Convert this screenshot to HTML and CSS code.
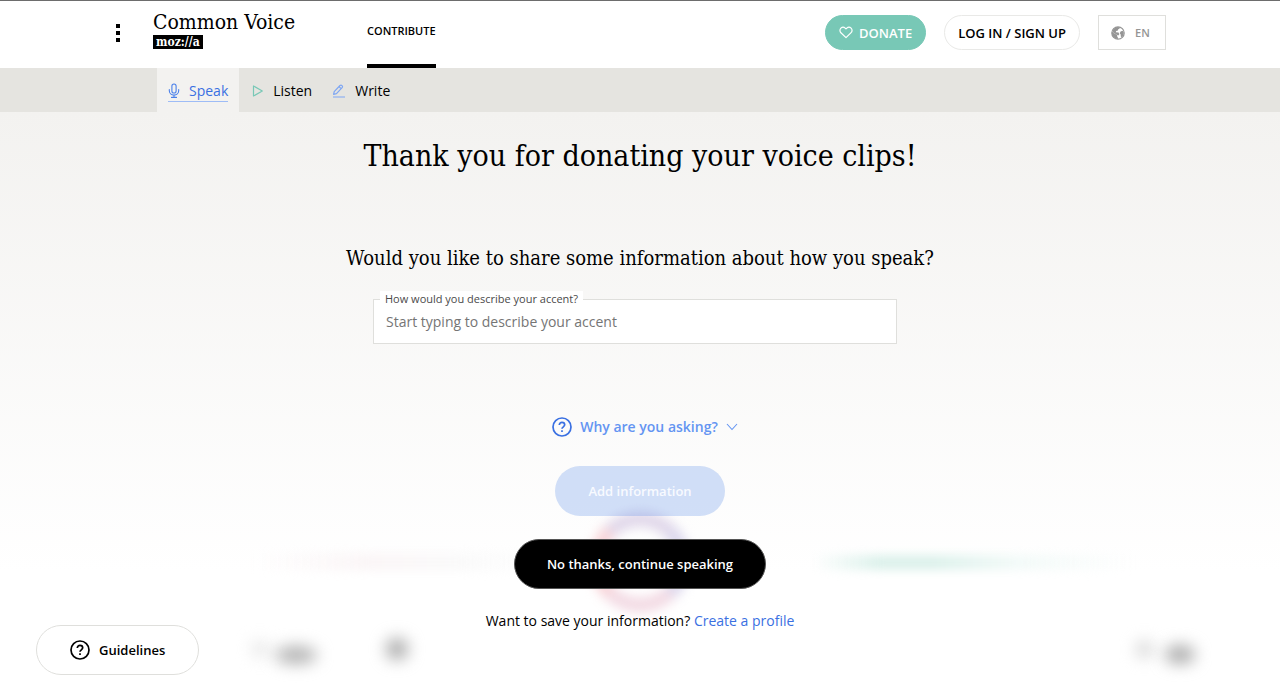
FILE: index.html
```html
<!DOCTYPE html>
<html lang="en">
<head>
<meta charset="utf-8">
<meta name="viewport" content="width=device-width, initial-scale=1">
<title>Common Voice</title>
<link rel="stylesheet" href="styles.css">
</head>
<body>
<header class="header">
  <div class="header-inner">
    <button class="menu-button" type="button" aria-label="Menu"><span></span><span></span><span></span></button>
    <a class="logo" href="#">
      <span class="logo-name">Common Voice</span>
      <span class="logo-brand">moz://a</span>
    </a>
    <nav class="main-nav"><a href="#">CONTRIBUTE</a></nav>
    <div class="header-actions">
      <a class="pill donate" href="#">
        <svg width="14" height="13" viewBox="0 0 14 13" fill="none" stroke="currentColor" stroke-width="1.2" stroke-linejoin="round"><path d="M7 11.600 1.900 6.700C.6 5.400.7 3.300 1.900 2.100 3.100.9 5 .9 6.200 2.100l.8.800.8-.8c1.200-1.200 3.100-1.200 4.300 0s1.300 3.300 0 4.600z"/></svg>
        <span>DONATE</span>
      </a>
      <a class="pill login" href="#">LOG IN / SIGN UP</a>
      <button class="language" type="button">
        <svg width="14" height="14" viewBox="0 0 14 14"><circle cx="7" cy="7" r="6.200" fill="none" stroke="#959595" stroke-width="1.200"/><path fill="#959595" d="M1 5.500 3.200 7.600 4.800 8.200 6.200 9.300v1.200l.7 1V13A6.200 6.200 0 0 1 1 5.500zM3 2.400 6 .9l2.900.3-.5 1.600-1.200.5-.3 1.200-1.700.4-.4 1.400 2.800.3.7 1.700-1 1.300-2.200-1.300-2.600-1.600-1-2.100zM9.600 5.600l2-.9 1.200 1.700-.3 2.600-1.700 2.300-1-.8-.1-2-1-1.200z"/></svg>
        <span>EN</span>
      </button>
    </div>
  </div>
</header>
<nav class="tabs">
  <a class="tab tab-active" href="#">
    <span class="tab-content">
      <svg width="12" height="16" viewBox="0 0 12 16" fill="none" stroke="#4a80ea" stroke-width="1.100" stroke-linecap="round"><rect x="3.900" y="1" width="4.200" height="9" rx="2.100"/><path d="M1.300 6.500v1.300a4.700 4.300 0 0 0 9.400 0V6.500M6 12.200v2M3.500 14.400h5"/></svg>
      <span>Speak</span>
    </span>
  </a>
  <a class="tab" href="#">
    <span class="tab-content">
      <svg width="12" height="14" viewBox="0 0 12 14" fill="none" stroke="#78c8b6" stroke-width="1.200" stroke-linejoin="round"><path d="M1.500 2v10L10.300 7z"/></svg>
      <span>Listen</span>
    </span>
  </a>
  <a class="tab" href="#">
    <span class="tab-content">
      <svg width="14" height="14" viewBox="0 0 14 14" fill="none" stroke="#7ea6f3" stroke-width="1.200" stroke-linejoin="round"><path d="M2.200 7.600 8 1.500q1-.8 2 .1t.1 2L4.500 9.700l-2.900.6zM7 2.600l2.200 2.100M1 13h12"/></svg>
      <span>Write</span>
    </span>
  </a>
</nav>
<main class="content">
  <div class="backdrop" aria-hidden="true">
    <i class="glow ring"></i><i class="glow wave wave-pink"></i><i class="glow wave wave-green"></i>
    <i class="glow spot-a"></i><i class="glow spot-b"></i><i class="glow spot-c"></i><i class="glow spot-d"></i><i class="glow spot-e"></i>
  </div>
  <h1>Thank you for donating your voice clips!</h1>
  <h2>Would you like to share some information about how you speak?</h2>
  <div class="field">
    <label for="accent">How would you describe your accent?</label>
    <input id="accent" type="text" placeholder="Start typing to describe your accent">
  </div>
  <button class="why" type="button">
    <svg width="20" height="20" viewBox="0 0 20 20" fill="none" stroke="#3a70e2" stroke-width="1.700"><circle cx="10" cy="10" r="9"/><path d="M7.300 8c0-1.700 1.200-2.700 2.700-2.700s2.700 1 2.700 2.500c0 1.900-2.700 2.100-2.700 4"/><path d="M10 13.200v1.700"/></svg>
    <span>Why are you asking?</span>
    <svg width="12" height="8" viewBox="0 0 12 8" fill="none" stroke="currentColor" stroke-width="1.100"><path d="m1 1 5 5.500L11 1"/></svg>
  </button>
  <button class="action add" type="button" disabled>Add information</button>
  <button class="action skip" type="button">No thanks, continue speaking</button>
  <p class="profile">Want to save your information? <a href="#">Create a profile</a></p>
</main>
<button class="guidelines" type="button">
  <svg width="20" height="20" viewBox="0 0 20 20" fill="none" stroke="currentColor" stroke-width="1.700"><circle cx="10" cy="10" r="9"/><path d="M7.300 8c0-1.700 1.200-2.700 2.700-2.700s2.700 1 2.700 2.500c0 1.900-2.700 2.100-2.700 4"/><path d="M10 13.200v1.700"/></svg>
  <span>Guidelines</span>
</button>
</body>
</html>
```
FILE: styles.css
```css
* { box-sizing: border-box; }
body {
  margin: 0;
  min-height: 100vh;
  display: flex;
  flex-direction: column;
  font-family: "Open Sans", "Noto Sans", sans-serif;
  font-size: 14px;
  color: #000;
  background: #fff;
}
a { color: inherit; text-decoration: none; }
button { font: inherit; color: inherit; cursor: pointer; }
svg { flex: none; }

.header { border-top: 1px solid #6d6d6d; background: #fff; }
.header-inner { display: flex; height: 67px; padding: 0 114px; }
.menu-button {
  display: flex;
  flex-direction: column;
  align-items: center;
  justify-content: center;
  gap: 3px;
  width: 8px;
  margin-right: 31px;
  padding: 0 0 4px;
  border: 0;
  background: none;
}
.menu-button span { width: 4px; height: 4px; background: #000; }
.logo {
  display: flex;
  flex-direction: column;
  align-items: flex-start;
  width: 144px;
  padding-top: 9px;
  font-family: "DejaVu Serif Condensed", "DejaVu Serif", serif;
  white-space: nowrap;
}
.logo-name { font-size: 21px; line-height: 24px; }
.logo-brand {
  padding: 0 3px;
  margin-top: 1px;
  background: #000;
  color: #fff;
  font-size: 12px;
  font-weight: bold;
  line-height: 14px;
}
.main-nav { display: flex; margin-left: 70px; }
.main-nav a {
  display: flex;
  align-items: center;
  padding-bottom: 5px;
  border-bottom: 4px solid #000;
  font-size: 11px;
  font-weight: 600;
}
.header-actions {
  display: flex;
  align-items: flex-start;
  gap: 18px;
  margin-left: auto;
  padding-top: 14px;
}
.pill {
  display: flex;
  align-items: center;
  gap: 6px;
  height: 35px;
  padding: 0 13px;
  border: 1px solid #e9e9e7;
  border-radius: 18px;
  font-size: 13px;
  font-weight: 600;
  white-space: nowrap;
}
.donate { border-color: #78c8b6; background: #78c8b6; color: #fff; }
.language {
  display: flex;
  align-items: center;
  gap: 10px;
  width: 68px;
  height: 35px;
  padding: 0 12px;
  border: 1px solid #dfdfdc;
  background: #fff;
  color: #959595;
  font-size: 11px;
  font-weight: 600;
}

.tabs { display: flex; height: 44px; padding-left: 157px; background: #e5e4e0; }
.tab { display: flex; align-items: center; padding: 3px 10px 0; }
.tab-active { margin-right: 3px; padding: 3px 11px 0; background: #f3f2f0; color: #3a70e2; }
.tab-content {
  display: flex;
  align-items: center;
  gap: 9px;
  border-bottom: 1px solid transparent;
  line-height: 20px;
}
.tab-active .tab-content { border-color: #9ebcf6; }

.content {
  position: relative;
  flex: 1;
  display: flex;
  flex-direction: column;
  align-items: center;
  padding: 24px 24px 0;
  background: linear-gradient(#f3f2f0, #fff 460px);
  overflow: hidden;
}
.content > * { position: relative; }
h1, h2 {
  margin: 0;
  font-family: "DejaVu Serif Condensed", "DejaVu Serif", serif;
  font-weight: normal;
  text-align: center;
}
h1 { font-size: 30px; line-height: 40px; }
h2 { margin-top: 66px; font-size: 20px; line-height: 32px; }
.field { width: 100%; max-width: 524px; margin: 25px 10px 0 0; }
.field label {
  position: absolute;
  top: -8px;
  left: 7px;
  padding: 0 5px;
  background: #fff;
  color: #4a4a4a;
  font-size: 11px;
  line-height: 16px;
}
.field input {
  display: block;
  width: 100%;
  height: 45px;
  padding: 0 12px;
  border: 1px solid #dfdfdc;
  border-radius: 0;
  background: #fff;
  font: inherit;
}
.field input::placeholder { color: #757575; opacity: 1; }
.why {
  display: flex;
  align-items: center;
  gap: 8px;
  margin: 73px 0 0 10px;
  padding: 0;
  border: 0;
  background: none;
  color: #6495f2;
  font-weight: 600;
  line-height: 20px;
}
.action {
  height: 50px;
  border-radius: 25px;
  padding: 0 32px;
  font-size: 13px;
  font-weight: 600;
}
.add { margin-top: 29px; border: 1px solid transparent; background: rgba(74, 130, 232, 0.25); color: #f8faff; }
.skip { margin-top: 23px; border: 1px solid #555; background: #000; color: #fff; }
.profile { margin: 22px 0 0; line-height: 20px; }
.profile a { color: #3a70e2; }
.guidelines {
  position: fixed;
  left: 36px;
  bottom: 22px;
  display: flex;
  align-items: center;
  gap: 9px;
  height: 50px;
  padding: 0 33px;
  border: 1px solid #dfdfdc;
  border-radius: 25px;
  background: #fff;
  font-size: 13px;
  font-weight: 600;
}

.content > .backdrop { position: absolute; inset: 0; }
.glow { position: absolute; border-radius: 50%; filter: blur(8px); }
.ring {
  top: 400px;
  left: calc(50% - 50px);
  width: 100px;
  height: 100px;
  border: 14px solid;
  border-color: #ded4e8 #d8d4ec #f2d8e2 #f8d0d4;
  filter: blur(6px);
}
.wave { border-radius: 0; filter: blur(5px); }
.wave-pink {
  top: 441px;
  left: 250px;
  width: 300px;
  height: 18px;
  background: linear-gradient(90deg, transparent, #fbf6f7 40%, #fafafa 70%, transparent);
}
.wave-green {
  top: 443px;
  left: 800px;
  width: 330px;
  height: 15px;
  background: linear-gradient(90deg, transparent 4%, #dcf1eb 24%, #dcf1eb 40%, #f2faf8 65%, transparent);
}
.spot-a { top: 529px; left: 252px; width: 16px; height: 16px; background: #e4e4e4; }
.spot-b { top: 534px; left: 275px; width: 42px; height: 18px; background: #b2b2b2; }
.spot-c { top: 526px; left: 386px; width: 22px; height: 22px; background: #aaa; }
.spot-d { top: 529px; right: 127px; width: 17px; height: 17px; background: #d4d4d4; }
.spot-e { top: 533px; right: 85px; width: 30px; height: 19px; background: #aaa; }
```
